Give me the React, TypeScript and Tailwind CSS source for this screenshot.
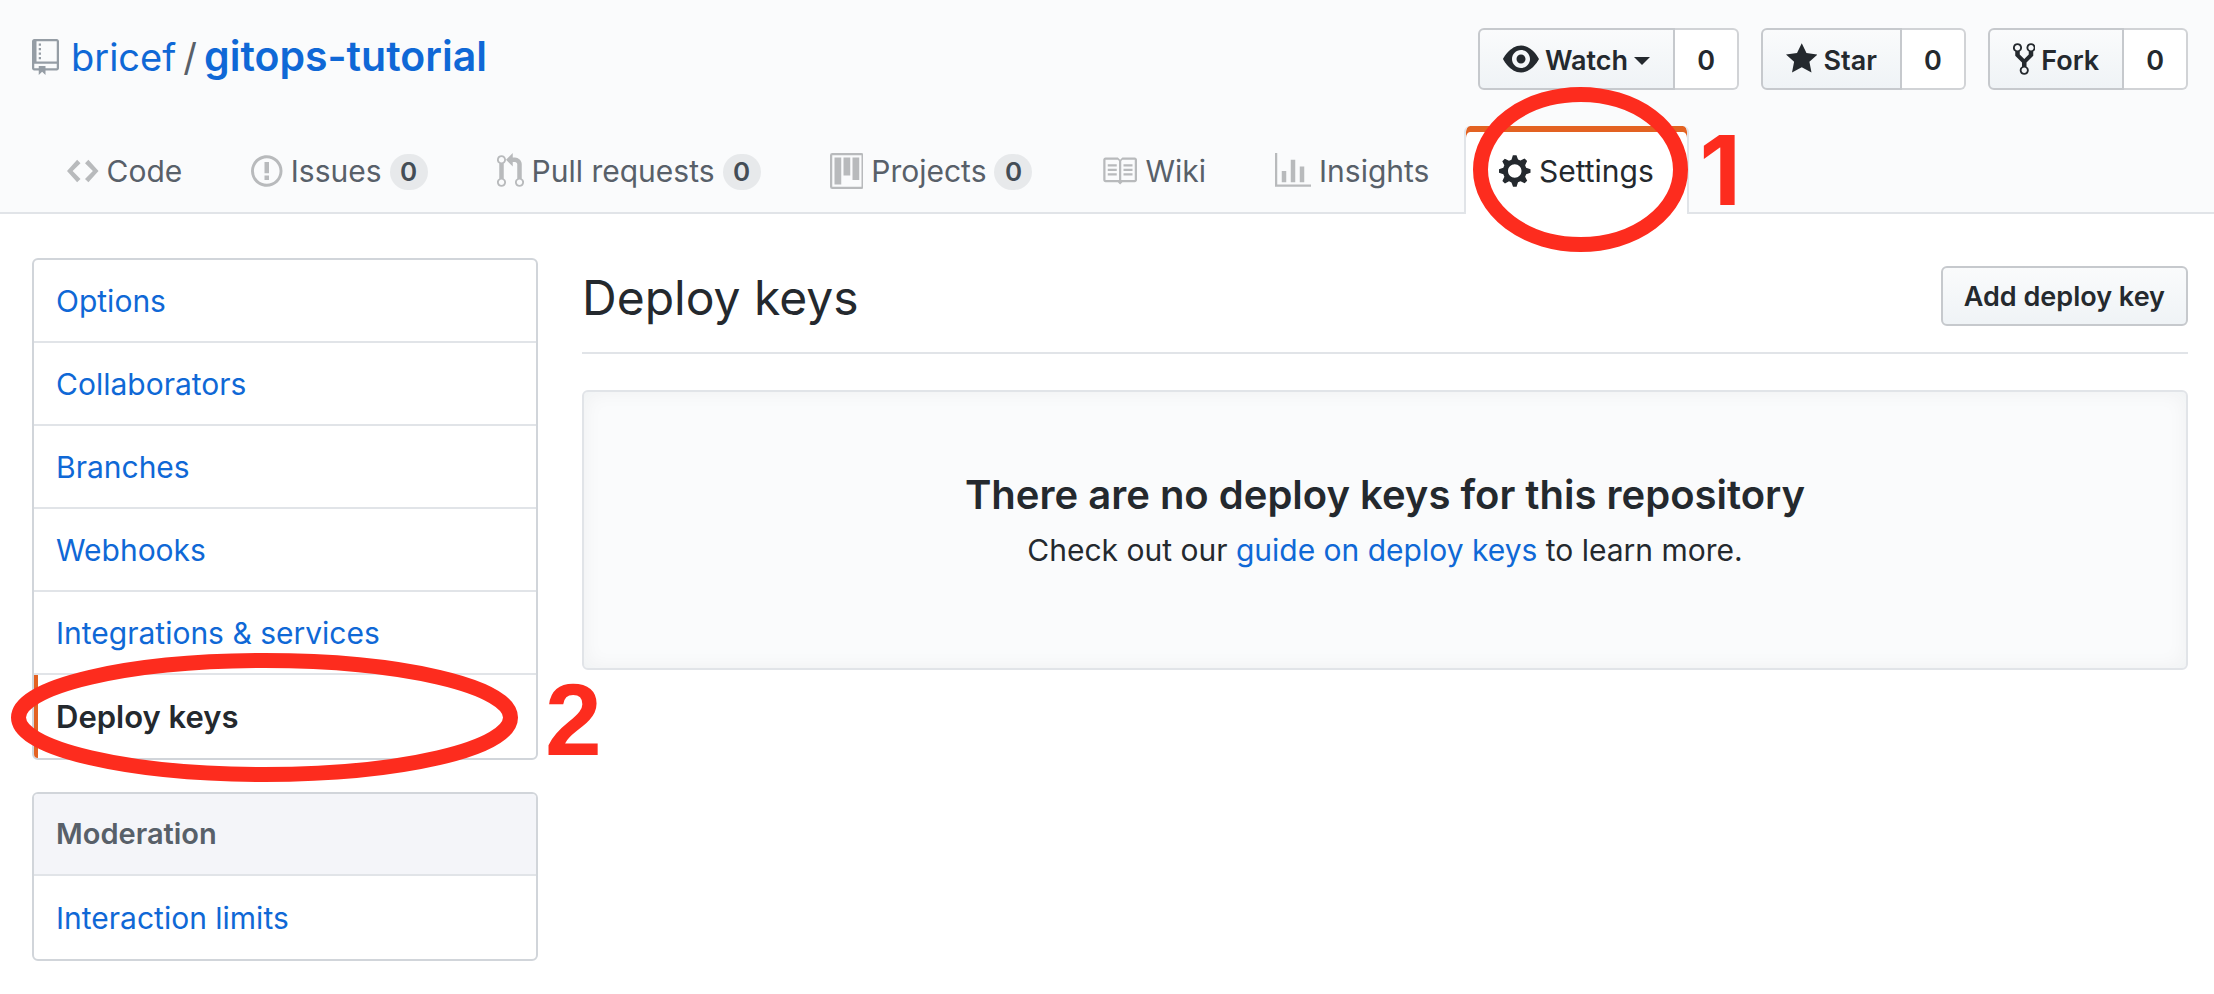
import type { ReactNode } from "react";

type IconShape = { width: number; d: string };

const icons: Record<string, IconShape> = {
  repo: {
    width: 12,
    d: "M4 9H3V8h1v1zm0-3H3v1h1V6zm0-2H3v1h1V4zm0-2H3v1h1V2zm8-1v12c0 .55-.45 1-1 1H6v2l-1.5-1.5L3 16v-2H1c-.55 0-1-.45-1-1V1c0-.55.45-1 1-1h10c.55 0 1 .45 1 1zm-1 10H1v2h2v-1h3v1h5v-2zm0-10H2v9h9V1z",
  },
  code: {
    width: 14,
    d: "M9.5 3L8 4.5 11.5 8 8 11.5 9.5 13 14 8 9.5 3zm-5 0L0 8l4.5 5L6 11.5 2.5 8 6 4.5 4.5 3z",
  },
  issue: {
    width: 14,
    d: "M7 2.3c3.14 0 5.7 2.56 5.7 5.7s-2.56 5.7-5.7 5.7A5.71 5.71 0 0 1 1.3 8c0-3.14 2.56-5.7 5.7-5.7zM7 1C3.14 1 0 4.14 0 8s3.14 7 7 7 7-3.14 7-7-3.14-7-7-7zm1 3H6v5h2V4zm0 6H6v2h2v-2z",
  },
  pull: {
    width: 12,
    d: "M11 11.28V5c-.03-.78-.34-1.47-.94-2.06C9.46 2.35 8.78 2.03 8 2H7V0L4 3l3 3V4h1c.27.02.48.11.69.31.21.2.3.42.31.69v6.28A1.993 1.993 0 0 0 10 15a1.993 1.993 0 0 0 1-3.72zm-1 2.92c-.66 0-1.2-.55-1.2-1.2 0-.65.55-1.2 1.2-1.2.65 0 1.2.55 1.2 1.2 0 .65-.55 1.2-1.2 1.2zM4 3c0-1.11-.89-2-2-2a1.993 1.993 0 0 0-1 3.72v6.56A1.993 1.993 0 0 0 2 15a1.993 1.993 0 0 0 1-3.72V4.72c.59-.34 1-.98 1-1.72zm-.8 10c0 .66-.55 1.2-1.2 1.2-.65 0-1.2-.55-1.2-1.2 0-.65.55-1.2 1.2-1.2.65 0 1.2.55 1.2 1.2zM2 4.2C1.34 4.2.8 3.65.8 3c0-.65.55-1.2 1.2-1.2.65 0 1.2.55 1.2 1.2 0 .65-.55 1.2-1.2 1.2z",
  },
  project: {
    width: 15,
    d: "M10 12h3V2h-3v10zm-4-2h3V2H6v8zm-4 4h3V2H2v12zm-1 1h13V1H1v14zM14 0H1a1 1 0 0 0-1 1v14a1 1 0 0 0 1 1h13a1 1 0 0 0 1-1V1a1 1 0 0 0-1-1z",
  },
  book: {
    width: 16,
    d: "M3 5h4v1H3V5zm0 3h4V7H3v1zm0 2h4V9H3v1zm11-5h-4v1h4V5zm0 2h-4v1h4V7zm0 2h-4v1h4V9zm2-6v9c0 .55-.45 1-1 1H9.5l-1 1-1-1H2c-.55 0-1-.45-1-1V3c0-.55.45-1 1-1h5.5l1 1 1-1H15c.55 0 1 .45 1 1zm-8 .5L7.5 3H2v9h6V3.5zm7-.5H9.5l-.5.5V12h6V3z",
  },
  graph: {
    width: 16,
    d: "M16 14v1H0V0h1v14h15zM5 13H3V8h2v5zm4 0H7V3h2v10zm4 0h-2V6h2v7z",
  },
  gear: {
    width: 14,
    d: "M14 8.77v-1.6l-1.94-.64-.45-1.09.88-1.84-1.13-1.13-1.81.91-1.09-.45-.69-1.92h-1.6l-.63 1.94-1.11.45-1.84-.88-1.13 1.13.91 1.81-.45 1.09L0 7.23v1.59l1.94.64.45 1.09-.88 1.84 1.13 1.13 1.81-.91 1.09.45.69 1.92h1.59l.63-1.94 1.11-.45 1.84.88 1.13-1.13-.92-1.81.47-1.09L14 8.75v.02zM7 11c-1.66 0-3-1.34-3-3s1.34-3 3-3 3 1.34 3 3-1.34 3-3 3z",
  },
  eye: {
    width: 16,
    d: "M8.06 2C3 2 0 8 0 8s3 6 8.06 6C13 14 16 8 16 8s-3-6-7.94-6zM8 12c-2.2 0-4-1.78-4-4 0-2.2 1.8-4 4-4 2.22 0 4 1.8 4 4 0 2.22-1.78 4-4 4zm2-4c0 1.11-.89 2-2 2-1.11 0-2-.89-2-2 0-1.11.89-2 2-2 1.11 0 2 .89 2 2z",
  },
  star: {
    width: 14,
    d: "M14 6l-4.9-.64L7 1 4.9 5.36 0 6l3.6 3.26L2.67 14 7 11.67 11.33 14l-.93-4.74z",
  },
  fork: {
    width: 10,
    d: "M8 1a1.993 1.993 0 0 0-1 3.72V6L5 8 3 6V4.72A1.993 1.993 0 0 0 2 1a1.993 1.993 0 0 0-1 3.72V6.5l3 3v1.78A1.993 1.993 0 0 0 5 15a1.993 1.993 0 0 0 1-3.72V9.5l3-3V4.72A1.993 1.993 0 0 0 8 1zM2 4.2C1.34 4.2.8 3.65.8 3c0-.65.55-1.2 1.2-1.2.65 0 1.2.55 1.2 1.2 0 .65-.55 1.2-1.2 1.2zm3 10c-.66 0-1.2-.55-1.2-1.2 0-.65.55-1.2 1.2-1.2.65 0 1.2.55 1.2 1.2 0 .65-.55 1.2-1.2 1.2zm3-10c-.66 0-1.2-.55-1.2-1.2 0-.65.55-1.2 1.2-1.2.65 0 1.2.55 1.2 1.2 0 .65-.55 1.2-1.2 1.2z",
  },
};

function Icon({ name, className = "" }: { name: string; className?: string }) {
  const { width, d } = icons[name];
  return (
    <svg
      viewBox={`0 0 ${width} 16`}
      fill="currentColor"
      fillRule="evenodd"
      aria-hidden="true"
      className={`h-9 w-auto shrink-0 ${className}`}
    >
      <path d={d} />
    </svg>
  );
}

function SocialButton({ icon, label, caret = false }: { icon: string; label: string; caret?: boolean }) {
  return (
    <div className="flex h-[62px] text-[27px] leading-9 font-semibold">
      <button
        type="button"
        className="flex items-center gap-[6px] rounded-l-md border-2 border-[#c6c9cd] bg-linear-to-b from-[#fafbfc] to-[#eff3f6] px-[23px] pt-[3px]"
      >
        <Icon name={icon} className="-mt-1" />
        {label}
        {caret && (
          <svg viewBox="0 0 16 8" fill="currentColor" aria-hidden="true" className="h-2 w-4">
            <path d="M0 0h16L8 8z" />
          </svg>
        )}
      </button>
      <a
        href="#count"
        className="flex items-center rounded-r-md border-2 border-l-0 border-[#d1d3d6] bg-white px-[22px] pt-[3px]"
      >
        0
      </a>
    </div>
  );
}

function Tab({ icon, label, count }: { icon: string; label: string; count?: number }) {
  return (
    <a href={`#${icon}`} className="flex h-[88px] items-center gap-2 px-[34px] pt-[2px] text-[#586069]">
      <Icon name={icon} className="text-[#b8babc]" />
      {label}
      {count !== undefined && (
        <span className="mt-0.5 flex h-9 min-w-[38px] items-center justify-center rounded-full bg-[#e7e9eb] text-[26px] font-semibold text-[#444d56]">
          {count}
        </span>
      )}
    </a>
  );
}

function MenuBox({ children }: { children: ReactNode }) {
  return (
    <div className="divide-y-2 divide-[#e1e4e8] overflow-hidden rounded-md border-2 border-[#d1d5da] bg-white">
      {children}
    </div>
  );
}

function MenuLink({ label }: { label: string }) {
  return (
    <a href="#menu" className="flex h-[83px] items-center px-[22px] text-[#0f68d6]">
      {label}
    </a>
  );
}

function Ring({ className, rx, ry }: { className: string; rx: number; ry: number }) {
  const w = rx * 2 + 15;
  const h = ry * 2 + 15;
  return (
    <svg
      viewBox={`0 0 ${w} ${h}`}
      width={w}
      height={h}
      fill="none"
      aria-hidden="true"
      className={`pointer-events-none absolute z-10 ${className}`}
    >
      <ellipse cx={w / 2} cy={h / 2} rx={rx} ry={ry} stroke="#fd2c1e" strokeWidth="15" />
    </svg>
  );
}

export default function App() {
  return (
    <div className="min-h-screen bg-white font-['Inter','Liberation_Sans',sans-serif] text-[30px] leading-9 text-[#24292e]">
      <header className="border-b-2 border-[#e1e4e8] bg-[#fafbfc] pr-[26px] pl-8">
        <div className="flex h-[126px] items-start justify-between">
          <h1 className="flex items-center gap-3 pt-[30px] text-[38px] leading-[52px]">
            <Icon name="repo" className="text-[#959da5]" />
            <span className="flex items-baseline gap-[7px] text-[#586069]">
              <a href="#owner" className="text-[#0f68d6]">bricef</a>
              <span>/</span>
              <a href="#repo" className="text-[41px] font-semibold text-[#0f68d6]">gitops-tutorial</a>
            </span>
          </h1>
          <div className="flex gap-[22px] pt-7">
            <SocialButton icon="eye" label="Watch" caret />
            <SocialButton icon="star" label="Star" />
            <SocialButton icon="fork" label="Fork" />
          </div>
        </div>
        <nav aria-label="Repository" className="-mb-0.5 flex gap-px pl-px">
          <Tab icon="code" label="Code" />
          <Tab icon="issue" label="Issues" count={0} />
          <Tab icon="pull" label="Pull requests" count={0} />
          <Tab icon="project" label="Projects" count={0} />
          <Tab icon="book" label="Wiki" />
          <Tab icon="graph" label="Insights" />
          <div className="relative">
            <a
              href="#settings"
              aria-current="page"
              className="flex h-[88px] items-center gap-2 overflow-hidden rounded-t-md border-x-2 border-[#e1e4e8] bg-white px-[33px] pt-[2px] shadow-[inset_0_6px_0_#e36222]"
            >
              <Icon name="gear" />
              Settings
            </a>
            <Ring className="-top-[39px] left-[9px]" rx={100} ry={75} />
            <span className="absolute top-0 left-[235px] text-[96px] leading-[88px] font-bold text-[#fd2c1e]">1</span>
          </div>
        </nav>
      </header>

      <div className="flex gap-11 pt-11 pr-[26px] pb-8 pl-8">
        <aside className="flex w-[506px] shrink-0 flex-col gap-8">
          <nav aria-label="Settings" className="relative">
            <MenuBox>
              <MenuLink label="Options" />
              <MenuLink label="Collaborators" />
              <MenuLink label="Branches" />
              <MenuLink label="Webhooks" />
              <MenuLink label="Integrations & services" />
              <a
                href="#deploy-keys"
                aria-current="page"
                className="flex h-[83px] items-center px-[22px] text-[31px] font-semibold shadow-[inset_4px_0_0_#e36222]"
              >
                Deploy keys
              </a>
            </MenuBox>
            <Ring className="-bottom-[22px] -left-[21px]" rx={246} ry={57} />
            <span className="absolute -bottom-1 left-[513px] font-['Liberation_Sans',sans-serif] text-[102px] leading-[88px] font-bold text-[#fd2c1e]">
              2
            </span>
          </nav>
          <MenuBox>
            <h2 className="flex h-[82px] items-center bg-[#f4f5f9] px-[22px] text-[29px] font-semibold text-[#586069]">
              Moderation
            </h2>
            <MenuLink label="Interaction limits" />
          </MenuBox>
        </aside>

        <main className="min-w-0 flex-1">
          <div className="flex h-24 items-start justify-between border-b-2 border-[#e1e4e8]">
            <h2 className="pt-2 text-[48px] leading-[64px]">Deploy keys</h2>
            <button
              type="button"
              className="mt-2 flex h-[60px] items-center rounded-md border-2 border-[#c6c9cd] bg-linear-to-b from-[#fafbfc] to-[#eff3f6] px-[21px] pt-[2px] text-[27px] font-semibold"
            >
              Add deploy key
            </button>
          </div>
          <section className="mt-9 h-[280px] rounded-md border-2 border-[#e1e4e8] bg-[#fafbfc] pt-[76px] text-center shadow-[inset_0_0_20px_rgba(27,31,35,0.05)]">
            <h3 className="text-[40px] leading-[54px] font-semibold">There are no deploy keys for this repository</h3>
            <p className="pt-1 leading-[48px]">
              Check out our{" "}
              <a href="#guide" className="text-[#0f68d6]">guide on deploy keys</a> to learn more.
            </p>
          </section>
        </main>
      </div>
    </div>
  );
}
